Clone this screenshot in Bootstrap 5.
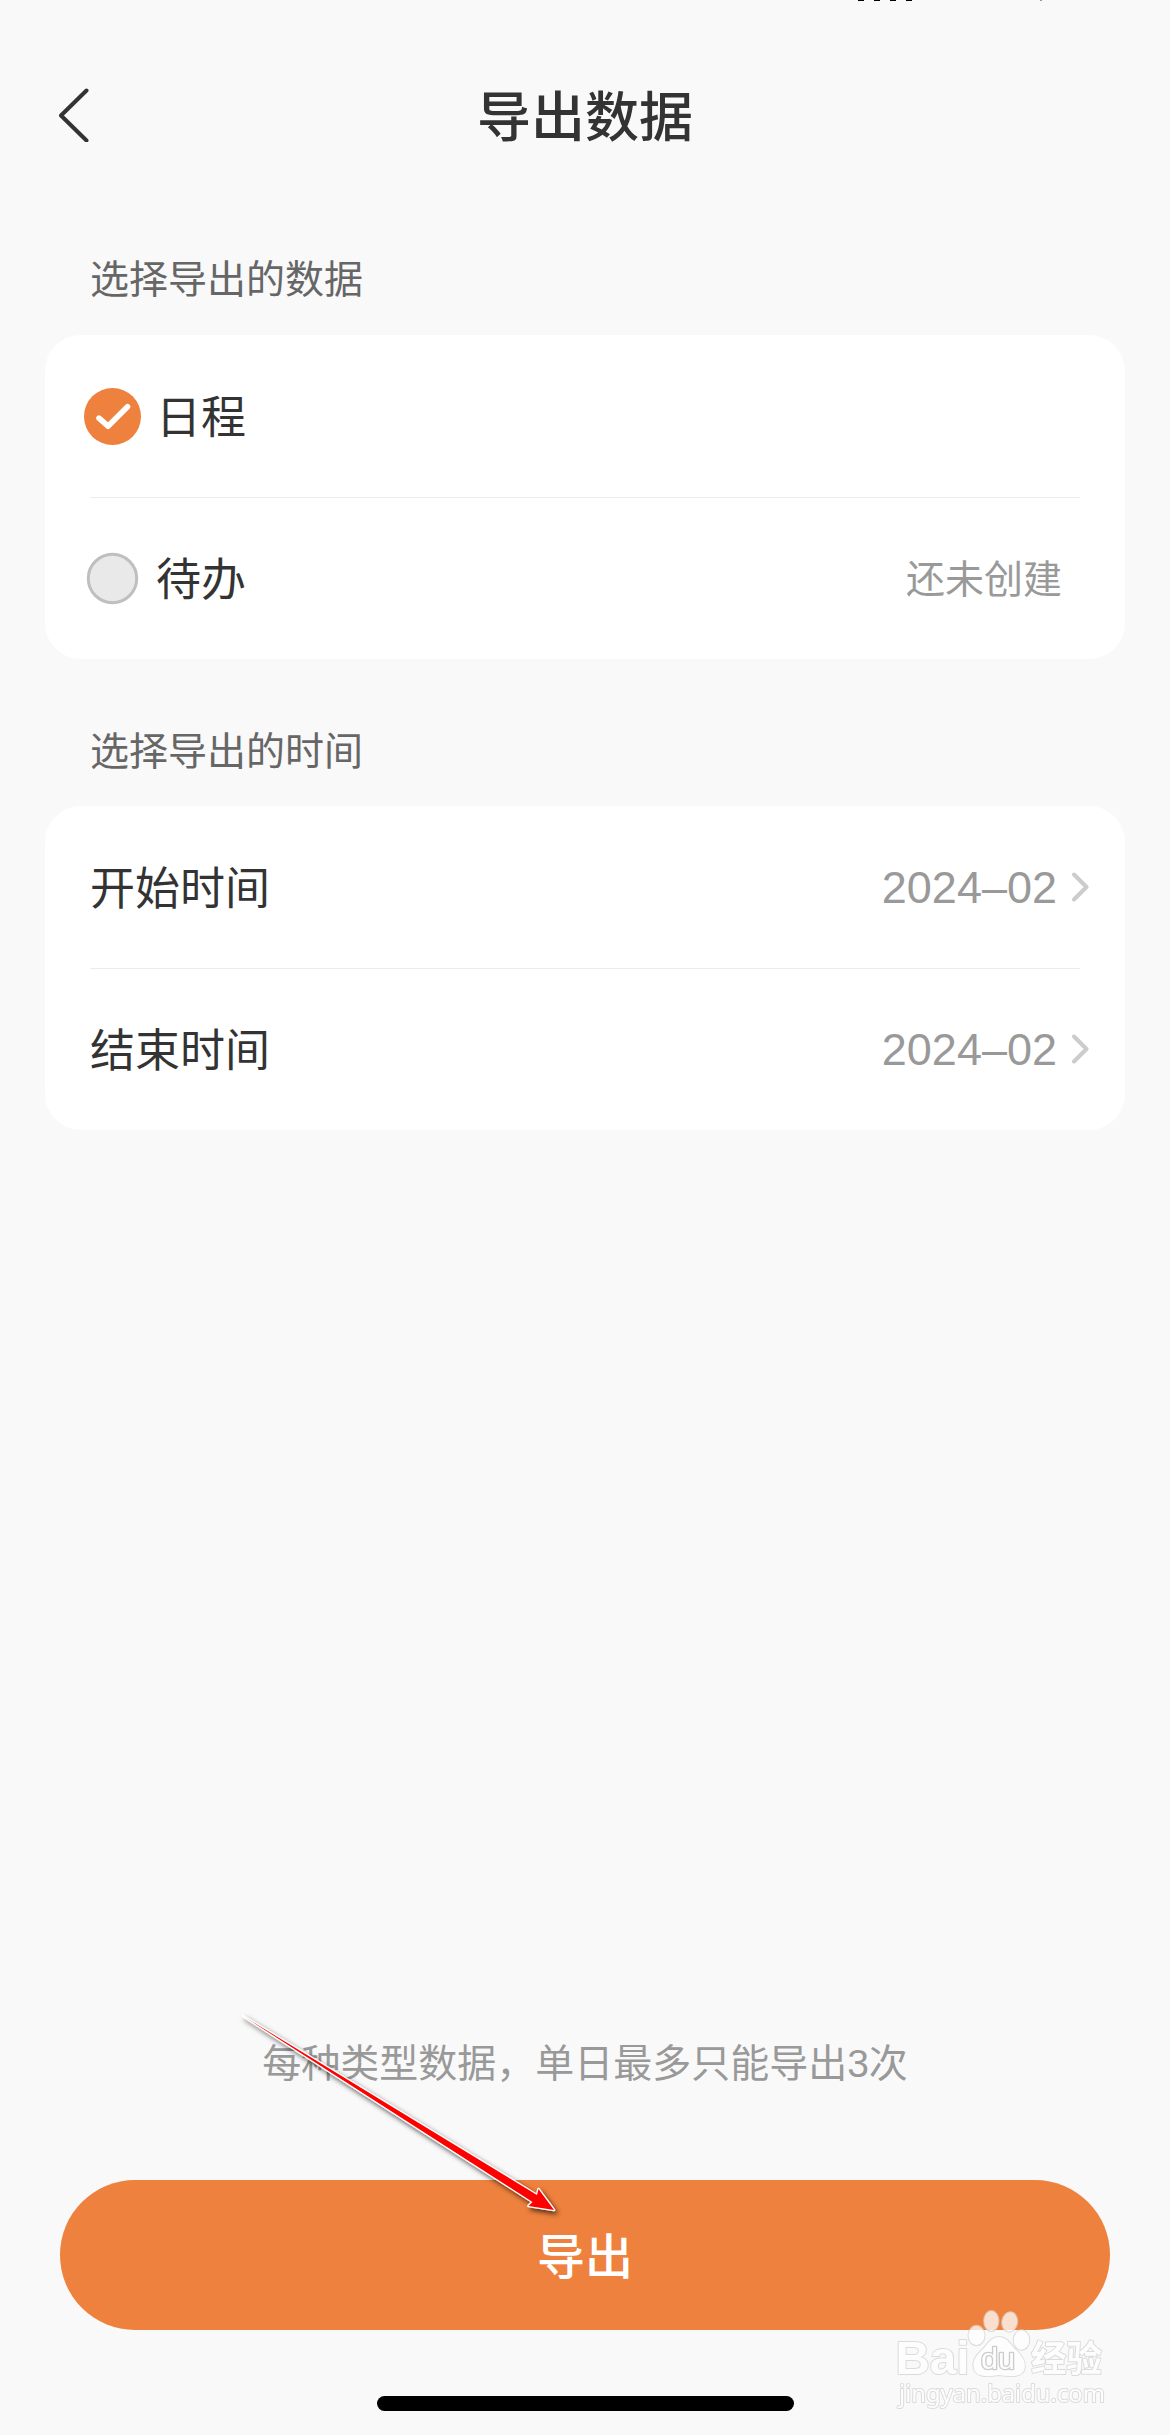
<!DOCTYPE html>
<html lang="zh-CN">
<head>
<meta charset="utf-8">
<meta name="viewport" content="width=device-width, initial-scale=1">
<title>导出数据</title>
<link href="https://cdn.jsdelivr.net/npm/bootstrap@5.3.0/dist/css/bootstrap.min.css" rel="stylesheet">
<style>
body{background:#f9f9f9;color:#333;font-family:"Liberation Sans","Noto Sans CJK SC",sans-serif;}
svg{display:block;flex:none}
.screen{width:1170px;height:2435px;overflow:hidden}
.topbar{height:230px;padding:0 59px}
.topbar h1{font:500 54px/80px "Noto Sans CJK SC",sans-serif;color:#333;padding-bottom:3px}
.back-btn{width:30px}
.group-label{font:400 39px/58px "Noto Sans CJK SC",sans-serif;color:#666;padding-left:90px}
.label-data{margin:17px 0 30px}
.label-time{margin:60px 0 29px}
.panel{margin:0 45px;height:324px;border-radius:36px;background:#fff}
.panel-row{height:162px;font:400 45px/66px "Noto Sans CJK SC",sans-serif}
.panel-row.pick{padding:0 63px 0 39px}
.panel-row.when{padding:0 36px 0 45px}
.panel-rule{height:1px;margin:0 45px -1px;background:#ececec;position:relative}
.row-name{padding-bottom:2px}
.pick-name{margin-left:15px}
.hint{font-size:39px;line-height:58px;color:#999;padding-bottom:4px}
.date{font:400 45px/66px "Liberation Sans",sans-serif;color:#999;margin-right:14px;padding-top:2px}
.foot-note{font:400 39px/58px "Liberation Sans","Noto Sans CJK SC",sans-serif;color:#999;margin-bottom:87px}
.btn-export{height:150px;margin:0 60px;padding:0 0 4px;background:#ee813d;color:#fff;font:500 48px/70px "Noto Sans CJK SC",sans-serif}
.btn-export:hover{background:#e2742f;color:#fff}
.home-bar{width:417px;height:15px;margin:66px 0 24px;background:#000}
.overlay{left:0;top:0;pointer-events:none}
</style>
</head>
<body>
<main class="screen position-relative d-flex flex-column">
  <header class="topbar d-flex align-items-center justify-content-between">
    <a href="#" class="back-btn" aria-label="返回">
      <svg width="30" height="54" viewBox="0 0 30 54" fill="none" stroke="#333" stroke-width="4" stroke-linecap="round" stroke-linejoin="round"><path d="M27.500 2.500 2 27.500 27.500 52.500"/></svg>
    </a>
    <h1 class="m-0">导出数据</h1>
    <span class="back-btn"></span>
  </header>

  <div class="group-label label-data">选择导出的数据</div>
  <section class="panel">
    <div class="panel-row pick d-flex align-items-center">
      <svg width="57" height="57" viewBox="0 0 57 57"><circle cx="28.500" cy="28.500" r="28.500" fill="#ee813d"/><path d="M15 30.200 24 38.200 43.500 18.800" fill="none" stroke="#fff" stroke-width="5.600" stroke-linecap="round" stroke-linejoin="round"/></svg>
      <span class="row-name pick-name">日程</span>
    </div>
    <div class="panel-rule"></div>
    <div class="panel-row pick d-flex align-items-center">
      <svg width="57" height="57" viewBox="0 0 57 57"><circle cx="28.500" cy="28.500" r="24.200" fill="#e9e9e9" stroke="#bfbfbf" stroke-width="3"/></svg>
      <span class="row-name pick-name">待办</span>
      <span class="hint ms-auto">还未创建</span>
    </div>
  </section>

  <div class="group-label label-time">选择导出的时间</div>
  <section class="panel">
    <div class="panel-row when d-flex align-items-center">
      <span class="row-name">开始时间</span>
      <span class="date ms-auto">2024–02</span>
      <svg width="18" height="30" viewBox="0 0 18 30" fill="none" stroke="#ccc" stroke-width="4" stroke-linecap="round" stroke-linejoin="round"><path d="M3 2.500 15.500 15 3 27.500"/></svg>
    </div>
    <div class="panel-rule"></div>
    <div class="panel-row when d-flex align-items-center">
      <span class="row-name">结束时间</span>
      <span class="date ms-auto">2024–02</span>
      <svg width="18" height="30" viewBox="0 0 18 30" fill="none" stroke="#ccc" stroke-width="4" stroke-linecap="round" stroke-linejoin="round"><path d="M3 2.500 15.500 15 3 27.500"/></svg>
    </div>
  </section>

  <footer class="mt-auto d-flex flex-column">
    <div class="foot-note text-center">每种类型数据，单日最多只能导出3次</div>
    <button class="btn btn-export rounded-pill border-0" type="button">导出</button>
    <div class="home-bar rounded-pill align-self-center"></div>
  </footer>

  <svg class="overlay position-absolute" width="1170" height="2435" viewBox="0 0 1170 2435">
    <defs>
      <filter id="arrowShade" x="-10%" y="-10%" width="125%" height="125%"><feDropShadow dx="2.500" dy="3" stdDeviation="2.600" flood-color="#000" flood-opacity=".65"/></filter>
    </defs>
    <!-- lower edge of the status bar signal dots -->
    <path d="M858 0h6v1h-6zM874 0h6v1h-6zM890 0h6v1h-6zM906 0h6v1h-6z" fill="#000"/>
    <path d="M1040 0h2v1h-2z" fill="#999"/>
    <path d="M243 2016 537 2195 538.500 2189 554 2210 528.500 2206 532.500 2202Z" fill="#f00" stroke="#fff" stroke-width="2.600" paint-order="stroke" stroke-linejoin="round" filter="url(#arrowShade)"/>
    <g fill="#fff" stroke="#d2d2d2" stroke-width="2" paint-order="stroke" stroke-linejoin="round" opacity=".75">
      <text x="895.500" y="2374" font-family="Liberation Sans" font-weight="700" font-size="47" textLength="74" lengthAdjust="spacingAndGlyphs">Bai</text>
      <ellipse cx="976.500" cy="2335.500" rx="8" ry="9.700"/>
      <ellipse cx="991.300" cy="2321" rx="7.200" ry="10"/>
      <ellipse cx="1009.700" cy="2322" rx="7.500" ry="9.700" transform="rotate(8 1010 2322)"/>
      <ellipse cx="1021.500" cy="2340" rx="7.800" ry="9.700"/>
      <path d="M999 2337C1008 2337 1011 2346 1017 2351C1023 2357 1026 2362 1024.500 2369C1022 2378 1010 2376.500 999 2375C989 2376.500 977 2378 974 2369C972 2362 975 2357 981 2351C987 2346 990 2337 999 2337Z"/>
      <text x="981" y="2369" font-family="Liberation Sans" font-size="29" textLength="34" lengthAdjust="spacingAndGlyphs" stroke="#bdbdbd" stroke-width="2.600">du</text>
      <text x="1031" y="2372" font-family="Noto Sans CJK SC" font-weight="700" font-size="36" textLength="71" lengthAdjust="spacingAndGlyphs">经验</text>
      <text x="899" y="2401.500" font-family="Noto Sans" font-size="24" textLength="206" lengthAdjust="spacingAndGlyphs">jingyan.baidu.com</text>
    </g>
  </svg>
</main>
<script src="https://cdn.jsdelivr.net/npm/bootstrap@5.3.0/dist/js/bootstrap.bundle.min.js"></script>
</body>
</html>
